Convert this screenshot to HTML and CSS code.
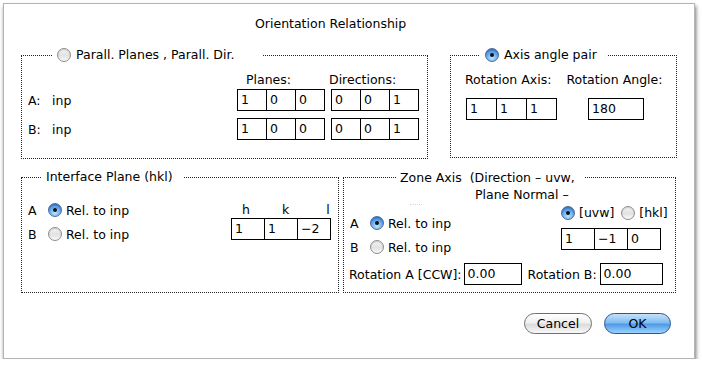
FILE: index.html
```html
<!DOCTYPE html>
<html lang="en">

<head>
    <meta charset="UTF-8">
    <title>Orientation Relationship</title>
    <link rel="stylesheet" href="styles.css">
</head>

<body>
    <div class="window">
        <div class="title">Orientation Relationship</div>

        <div class="row row-top">
            <!-- Parallel planes / directions -->
            <div class="group group-parallel">
                <div class="legend legend-parallel">
                    <span class="radio"></span>
                    <span>Parall. Planes , Parall. Dir.</span>
                </div>
                <div class="pp-head">
                    <span class="pp-planes">Planes:</span>
                    <span class="pp-dirs">Directions:</span>
                </div>
                <div class="pp-row">
                    <span class="pp-label">A:</span>
                    <span class="pp-inp">inp</span>
                    <div class="cells pp-cells">
                        <span class="cell">1</span><span class="cell">0</span><span class="cell">0</span>
                    </div>
                    <div class="cells pp-cells">
                        <span class="cell">0</span><span class="cell">0</span><span class="cell">1</span>
                    </div>
                </div>
                <div class="pp-row">
                    <span class="pp-label">B:</span>
                    <span class="pp-inp">inp</span>
                    <div class="cells pp-cells">
                        <span class="cell">1</span><span class="cell">0</span><span class="cell">0</span>
                    </div>
                    <div class="cells pp-cells">
                        <span class="cell">0</span><span class="cell">0</span><span class="cell">1</span>
                    </div>
                </div>
            </div>

            <!-- Axis angle pair -->
            <div class="group group-axis">
                <div class="legend legend-axis">
                    <span class="radio checked"></span>
                    <span>Axis angle pair</span>
                </div>
                <div class="ax-head">
                    <span class="ax-axis">Rotation Axis:</span>
                    <span class="ax-angle">Rotation Angle:</span>
                </div>
                <div class="ax-row">
                    <div class="cells ax-cells">
                        <span class="cell">1</span><span class="cell">1</span><span class="cell">1</span>
                    </div>
                    <div class="cells">
                        <span class="cell ax-value">180</span>
                    </div>
                </div>
            </div>
        </div>

        <div class="row row-bottom">
            <!-- Interface plane -->
            <div class="group group-interface">
                <div class="legend legend-interface">Interface Plane (hkl)</div>
                <div class="ip-body">
                    <div class="ip-left">
                        <div class="opt-row">
                            <span class="opt-letter">A</span>
                            <span class="radio checked"></span>
                            <span>Rel. to inp</span>
                        </div>
                        <div class="opt-row">
                            <span class="opt-letter">B</span>
                            <span class="radio"></span>
                            <span>Rel. to inp</span>
                        </div>
                    </div>
                    <div class="ip-right">
                        <div class="hkl-head">
                            <span class="hkl-h">h</span>
                            <span class="hkl-k">k</span>
                            <span class="hkl-l">l</span>
                        </div>
                        <div class="cells ip-cells">
                            <span class="cell">1</span><span class="cell">1</span><span class="cell">&minus;2</span>
                        </div>
                    </div>
                </div>
            </div>

            <!-- Zone axis -->
            <div class="group group-zone">
                <div class="legend legend-zone">
                    <div>Zone Axis&nbsp; (Direction &ndash; uvw,</div>
                    <div class="legend-line2">Plane Normal &ndash;</div>
                    <div class="legend-cut"></div>
                </div>
                <div class="za-body">
                    <div class="za-left">
                        <div class="opt-row">
                            <span class="opt-letter">A</span>
                            <span class="radio checked"></span>
                            <span>Rel. to inp</span>
                        </div>
                        <div class="opt-row">
                            <span class="opt-letter">B</span>
                            <span class="radio"></span>
                            <span>Rel. to inp</span>
                        </div>
                    </div>
                    <div class="za-right">
                        <div class="za-kind">
                            <span class="radio checked"></span>
                            <span>[uvw]</span>
                            <span class="radio za-hkl"></span>
                            <span>[hkl]</span>
                        </div>
                        <div class="cells za-cells">
                            <span class="cell">1</span><span class="cell">&minus;1</span><span class="cell">0</span>
                        </div>
                    </div>
                </div>
                <div class="za-rot">
                    <span>Rotation A [CCW]:</span>
                    <div class="cells"><span class="cell rot-a">0.00</span></div>
                    <span class="rot-b-label">Rotation B:</span>
                    <div class="cells"><span class="cell rot-b">0.00</span></div>
                </div>
            </div>
        </div>

        <div class="buttons">
            <button class="btn btn-cancel">Cancel</button>
            <button class="btn btn-ok">OK</button>
        </div>
    </div>
</body>

</html>
```

FILE: styles.css
```css
* {
    box-sizing: border-box;
}

body {
    margin: 0;
    background-color: #fff;
    font-family: 'DejaVu Sans', 'Liberation Sans', sans-serif;
    font-size: 12.5px;
    color: #000;
}

.window {
    margin: 3px 0 0 3px;
    width: 692px;
    height: 356px;
    background-color: #fff;
    border: 1px solid #b4b4b4;
    box-shadow: 1px 3px 4px rgba(0, 0, 0, 0.55);
}

.title {
    margin-top: 12px;
    line-height: 16px;
    padding-left: 251px;
}

.row {
    display: flex;
    padding-left: 17px;
}

.row-top {
    margin-top: 23px;
    gap: 22px;
}

.row-bottom {
    margin-top: 18px;
    gap: 4px;
}

/* dotted group boxes */
.group {
    border: 1px dotted #222;
}

.legend {
    margin-top: -9px;
    line-height: 16px;
    background-color: #fff;
    display: flex;
    align-items: center;
    gap: 5px;
}

.group-parallel {
    width: 407px;
    height: 104px;
}

.legend-parallel {
    margin-left: 30px;
    width: 211px;
    padding-left: 5px;
}

.group-axis {
    width: 227px;
    height: 103px;
}

.legend-axis {
    margin-left: 28px;
    width: 128px;
    padding-left: 6px;
}

.group-interface {
    width: 318px;
    height: 116px;
}

.legend-interface {
    margin-left: 19px;
    width: 143px;
    padding-left: 5px;
}

.group-zone {
    width: 333px;
    height: 116px;
}

.legend-zone {
    margin-left: 52px;
    width: 189px;
    display: block;
    padding-left: 4px;
    line-height: 17px;
    height: 36px;
}

.legend-line2 {
    padding-left: 75px;
}

.legend-cut {
    width: 12px;
    margin: 1px 0 0 10px;
    border-top: 1px dotted #d8d8d8;
}

/* radios */
.radio {
    display: inline-block;
    flex: none;
    width: 14px;
    height: 14px;
    border-radius: 50%;
    border: 1px solid #8c8c8c;
    background: linear-gradient(#f4f4f4, #e2e2e2 55%, #fafafa);
    box-shadow: inset 0 1px 1px rgba(0, 0, 0, 0.15);
    position: relative;
}

.radio.checked {
    border-color: #4a6c9c;
    background: radial-gradient(circle at 50% 75%, #bfe4ff 0, #6fb0ee 45%, #3b7fd6 80%);
}

.radio.checked::after {
    content: '';
    position: absolute;
    left: 4px;
    top: 4px;
    width: 4px;
    height: 4px;
    border-radius: 50%;
    background-color: #111;
}

/* input cells */
.cells {
    display: flex;
}

.cell {
    display: block;
    width: 30px;
    height: 22px;
    line-height: 20px;
    padding-left: 3px;
    border: 1px solid #000;
    background-color: #fff;
}

.cell + .cell {
    margin-left: -1px;
}

/* parallel planes */
.pp-head {
    margin-top: 9px;
    line-height: 16px;
    display: flex;
}

.pp-planes {
    margin-left: 224px;
}

.pp-dirs {
    margin-left: 38px;
}

.pp-row {
    display: flex;
    align-items: center;
    margin-top: 1px;
    gap: 6px;
}

.pp-row + .pp-row {
    margin-top: 7px;
}

.pp-label {
    margin-left: 6px;
    width: 18px;
}

.pp-inp {
    width: 179px;
}

/* axis angle */
.ax-head {
    margin-top: 9px;
    line-height: 16px;
    display: flex;
}

.ax-axis {
    margin-left: 14px;
}

.ax-angle {
    margin-left: 15px;
}

.ax-row {
    display: flex;
    margin-top: 10px;
    padding-left: 15px;
    gap: 31px;
}

.ax-cells .cell {
    width: 31px;
}

.ax-value {
    width: 56px;
}

/* option rows */
.opt-row {
    display: flex;
    align-items: center;
    height: 16px;
    gap: 4px;
}

.opt-row + .opt-row {
    margin-top: 8px;
}

.opt-letter {
    width: 16px;
}

/* interface plane */
.ip-body {
    display: flex;
    padding-left: 6px;
    margin-top: 17px;
}

.ip-left {
    width: 203px;
}

.hkl-head {
    display: flex;
    line-height: 16px;
}

.hkl-h {
    margin-left: 11px;
}

.hkl-k {
    margin-left: 32px;
}

.hkl-l {
    margin-left: 37px;
}

.ip-cells .cell {
    width: 34px;
}

/* zone axis */
.za-body {
    display: flex;
    padding-left: 6px;
}

.za-left {
    width: 211px;
    padding-top: 10px;
}

.za-kind {
    display: flex;
    align-items: center;
    gap: 4px;
    line-height: 16px;
}

.za-hkl {
    margin-left: 3px;
}

.za-cells {
    margin-top: 7px;
}

.za-cells .cell {
    width: 34px;
}

.za-rot {
    display: flex;
    align-items: center;
    padding-left: 5px;
    margin-top: 8px;
}

.rot-a {
    width: 58px;
    margin-left: 2px;
}

.rot-b-label {
    margin-left: 6px;
}

.rot-b {
    width: 63px;
    margin-left: 3px;
}

/* buttons */
.buttons {
    display: flex;
    justify-content: flex-end;
    gap: 12px;
    margin-top: 20px;
    padding-right: 23px;
}

.btn {
    height: 21px;
    border-radius: 11px;
    font-family: inherit;
    font-size: 12.5px;
    padding: 0;
    line-height: 18px;
}

.btn-cancel {
    width: 68px;
    border: 1px solid #707070;
    background: linear-gradient(#ffffff, #f0f0f0 45%, #dcdcdc 55%, #f8f8f8);
}

.btn-ok {
    width: 67px;
    border: 1px solid #30538e;
    background: linear-gradient(#c4e2fb, #82bdf1 45%, #4f9be6 55%, #9bd3ff);
}
```
